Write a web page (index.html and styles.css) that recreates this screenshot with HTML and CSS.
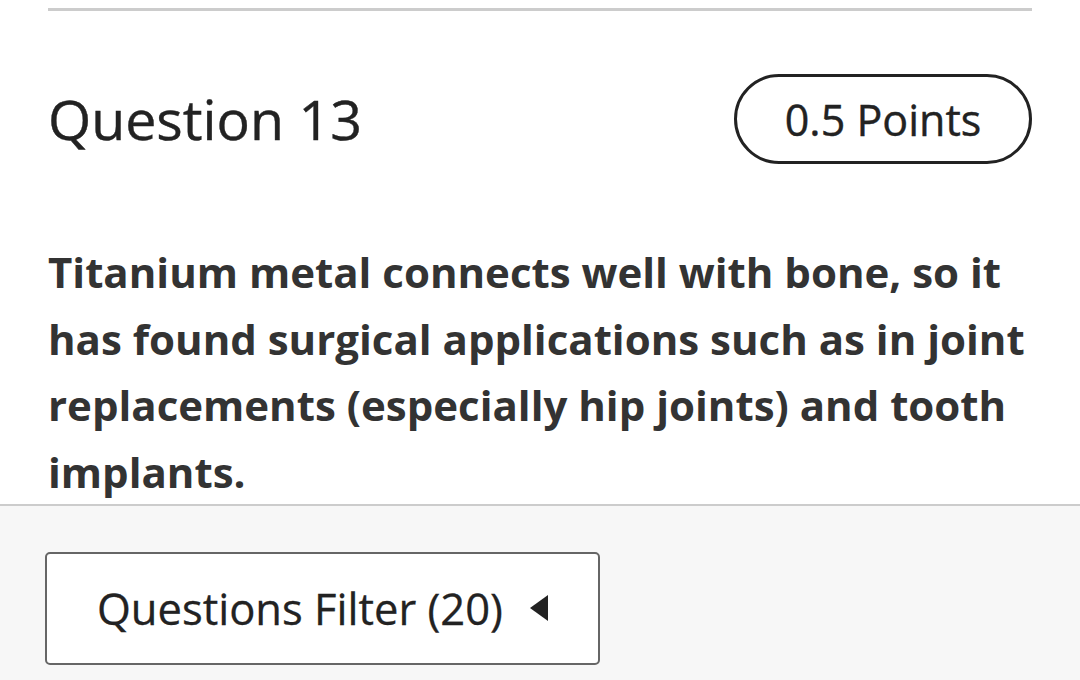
FILE: index.html
```html
<!DOCTYPE html>
<html lang="en">
<head>
	<meta charset="UTF-8">
	<title>Question 13</title>
<link rel="stylesheet" href="styles.css">
</head>
<body>
	<div class="question">
		<div class="question-head">
			<h2 class="question-title">Question 13</h2>
			<span class="points">0.5 Points</span>
		</div>
		<p class="question-text">Titanium metal connects well with bone, so it has found surgical applications such as in joint replacements (especially hip joints) and tooth implants.</p>
	</div>

	<div class="footer">
		<button class="filter-btn" type="button">
			<span>Questions Filter (20)</span>
			<span class="caret"></span>
		</button>
	</div>
</body>
</html>
```

FILE: styles.css
```css
*{margin: 0;padding: 0;box-sizing: border-box;}
body{background: #fff;font-family: "Open Sans", "Liberation Sans", sans-serif;color: #222;overflow: hidden;}

.question{margin: 8px 48px 0;border-top: 3px solid #cccccc;}
.question-head{display: flex;justify-content: space-between;align-items: center;padding-top: 63px;}
.question-title{font-size: 55.5px;font-weight: 400;line-height: 1.2;color: #222;-webkit-text-stroke: 0.4px #222;}
.points{display: flex;align-items: center;justify-content: center;width: 298px;height: 90px;border: 3px solid #222;border-radius: 45px;font-size: 43px;line-height: 1;color: #222;-webkit-text-stroke: 0.4px #222;}
.question-text{margin-top: 75px;font-size: 42px;font-weight: 700;line-height: 66.67px;color: #333;}

.footer{margin-top: -2px;border-top: 2px solid #cccccc;background: #f7f7f7;height: 200px;padding: 46px 0 0 45px;}
.filter-btn{display: inline-flex;align-items: center;gap: 27px;height: 113px;padding: 0 50px 0 50px;background: #fff;border: 2px solid #666;border-radius: 5px;font-family: "Open Sans", "Liberation Sans", sans-serif;font-size: 43.5px;color: #222;-webkit-text-stroke: 0.3px #222;}
.caret{width: 0;height: 0;border-top: 13px solid transparent;border-bottom: 13px solid transparent;border-right: 18px solid #222;}
```
